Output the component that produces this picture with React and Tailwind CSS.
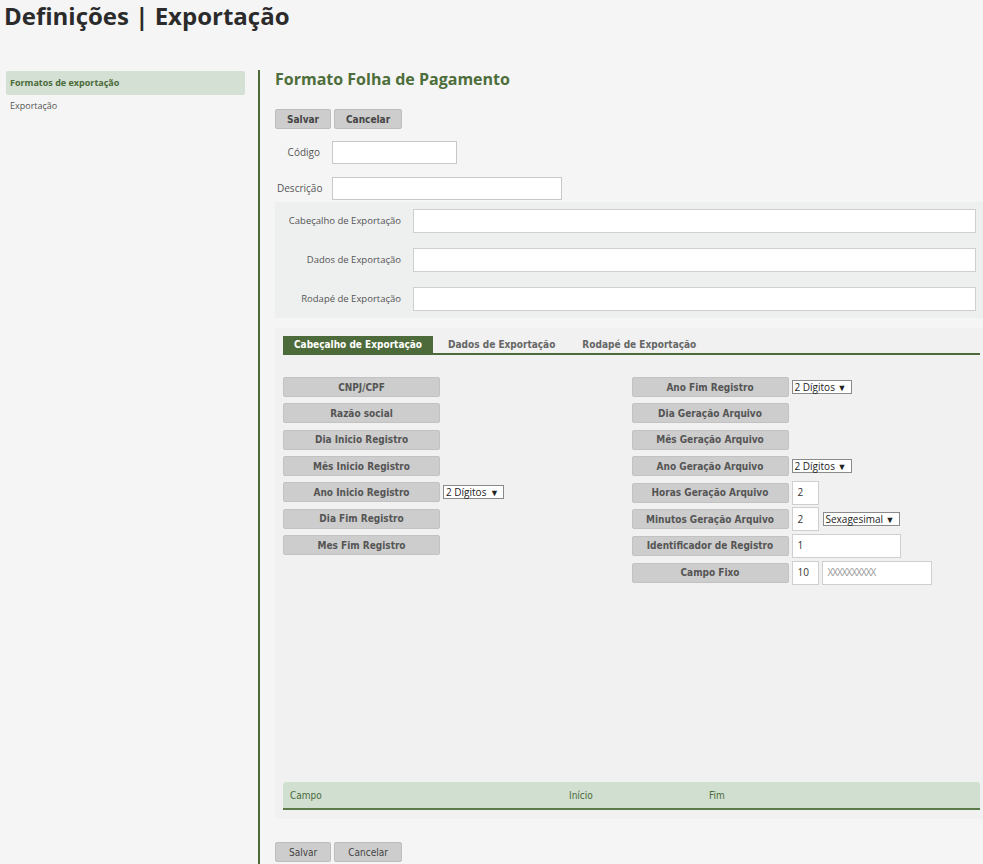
import React from 'react';

const btnFont = { fontFamily: '"DejaVu Sans Condensed", "DejaVu Sans", Verdana, sans-serif' };

const FieldBtn = ({ children }) => (
  <div
    className="w-[157px] h-[20px] flex items-center justify-center bg-[#cdcdcd] border border-[#c2c2c2] rounded-[2px] text-[10px] font-bold text-[#555] shrink-0"
    style={btnFont}
  >
    {children}
  </div>
);

const Sel = ({ label, w }) => (
  <div
    className={`h-[14px] ${w} bg-white border border-[#8a8a8a] flex items-center justify-between pl-[2px] pr-[4px] text-[10px] text-[#222] leading-none`}
    style={{ fontFamily: '"Open Sans", sans-serif' }}
  >
    <span>{label}</span>
    <span className="text-[9px]">▼</span>
  </div>
);

const Box = ({ value, w, gray }) => (
  <div
    className={`h-[24px] ${w} bg-white border border-[#cfcfcf] flex items-center px-[5px] text-[10px] ${gray ? 'text-[#999] tracking-[-1px]' : 'text-[#333]'}`}
    style={{ fontFamily: '"Open Sans", sans-serif' }}
  >
    {value}
  </div>
);

const Row = ({ children, tall }) => (
  <div className={`${tall ? 'h-[26.6px]' : 'h-[26.3px]'} flex items-center gap-[3px]`}>{children}</div>
);

const TopBtn = ({ children, light }) => (
  <button
    className={`h-[20px] bg-[#cdcdcd] border border-[#bdbdbd] rounded-[2px] text-[10px] text-[#444] ${light ? 'font-normal' : 'font-bold'}`}
    style={btnFont}
  >
    {children}
  </button>
);

export default function App() {
  return (
    <div
      className="min-h-[864px] w-[983px] bg-[#f5f5f5] text-[#333] overflow-hidden"
      style={{ fontFamily: '"Open Sans", sans-serif' }}
    >
      <h1 className="pl-[4px] text-[24px] font-bold leading-[32px] text-[#2b2b2b]">Definições | Exportação</h1>

      <div className="flex mt-[38px]">
        {/* Sidebar */}
        <div className="ml-[6px] w-[239px] pt-px shrink-0">
          <div className="h-[24px] bg-[#d3e0d3] rounded-[2px] flex items-center pl-[4px] text-[9px] font-bold text-[#4b6a3a]">
            Formatos de exportação
          </div>
          <div className="pl-[4px] mt-[4px] text-[9px] text-[#555]">Exportação</div>
        </div>

        {/* divider */}
        <div className="ml-[13px] w-[2px] bg-[#4d6b3a] min-h-[794px] shrink-0" />

        {/* Main */}
        <div className="ml-[15px] flex-1">
          <h2 className="text-[16px] font-bold leading-[20px] text-[#4d6e3a] -mt-px">Formato Folha de Pagamento</h2>

          <div className="flex gap-[3px] mt-[20px]">
            <TopBtn><span className="px-[11px]">Salvar</span></TopBtn>
            <TopBtn><span className="px-[11px]">Cancelar</span></TopBtn>
          </div>

          <div className="flex items-center mt-[12px] h-[23px]">
            <span className="w-[45px] text-right text-[10px] text-[#555]">Código</span>
            <div className="ml-[12px] w-[125px] h-[23px] bg-white border border-[#c8c8c8]" />
          </div>
          <div className="flex items-center mt-[13px] h-[23px]">
            <span className="w-[45px] pl-[2px] text-[10px] text-[#555]">Descrição</span>
            <div className="ml-[12px] w-[230px] h-[23px] bg-white border border-[#c8c8c8]" />
          </div>

          <div className="mt-[2px] bg-[#eeefef] pt-[7px] pb-[7px] pr-[7px] flex flex-col gap-[15px]">
            {['Cabeçalho de Exportação', 'Dados de Exportação', 'Rodapé de Exportação'].map((l) => (
              <div key={l} className="flex items-center">
                <span className="w-[126px] text-right text-[9.5px] text-[#555]">{l}</span>
                <div className="ml-[12px] flex-1 h-[24px] bg-white border border-[#cfcfcf]" />
              </div>
            ))}
          </div>

          <div className="mt-[10px] bg-[#f0f1f0] pt-[9px] pl-[8px] pr-[3px] pb-[9px]">
            <div className="flex items-end border-b-[2px] border-[#4d6b3a] h-[18px]" style={btnFont}>
              <div className="h-[17px] bg-[#4d6b3a] text-white text-[10px] font-bold px-[11px] flex items-center">
                Cabeçalho de Exportação
              </div>
              <div className="h-[17px] text-[#666] text-[10px] font-bold pl-[15px] flex items-center">Dados de Exportação</div>
              <div className="h-[17px] text-[#666] text-[10px] font-bold pl-[27px] flex items-center">Rodapé de Exportação</div>
            </div>

            <div className="grid grid-cols-2 pt-[19px] h-[427px]">
              <div>
                <Row><FieldBtn>CNPJ/CPF</FieldBtn></Row>
                <Row><FieldBtn>Razão social</FieldBtn></Row>
                <Row><FieldBtn>Dia Inicio Registro</FieldBtn></Row>
                <Row><FieldBtn>Mês Inicio Registro</FieldBtn></Row>
                <Row tall><FieldBtn>Ano Inicio Registro</FieldBtn><Sel label="2 Dígitos" w="w-[61px]" /></Row>
                <Row><FieldBtn>Dia Fim Registro</FieldBtn></Row>
                <Row><FieldBtn>Mes Fim Registro</FieldBtn></Row>
              </div>
              <div>
                <Row><FieldBtn>Ano Fim Registro</FieldBtn><Sel label="2 Dígitos" w="w-[60px]" /></Row>
                <Row><FieldBtn>Dia Geração Arquivo</FieldBtn></Row>
                <Row><FieldBtn>Mês Geração Arquivo</FieldBtn></Row>
                <Row tall><FieldBtn>Ano Geração Arquivo</FieldBtn><Sel label="2 Dígitos" w="w-[60px]" /></Row>
                <Row tall><FieldBtn>Horas Geração Arquivo</FieldBtn><Box value="2" w="w-[27px]" /></Row>
                <Row tall>
                  <FieldBtn>Minutos Geração Arquivo</FieldBtn>
                  <Box value="2" w="w-[27px]" />
                  <div className="ml-[1px]"><Sel label="Sexagesimal" w="w-[77px]" /></div>
                </Row>
                <Row tall><FieldBtn>Identificador de Registro</FieldBtn><Box value="1" w="w-[109px]" /></Row>
                <Row tall>
                  <FieldBtn>Campo Fixo</FieldBtn>
                  <Box value="10" w="w-[27px]" />
                  <Box value="XXXXXXXXXX" w="w-[110px]" gray />
                </Row>
              </div>
            </div>

            <div
              className="h-[28px] bg-[#d0dfd0] border-b-[2px] border-[#5a7a48] rounded-t-[3px] flex items-center text-[10px] text-[#4b6a3a]"
              style={{ fontFamily: '"DejaVu Sans Condensed", "Open Sans", sans-serif' }}
            >
              <span className="pl-[7px] w-[286px]">Campo</span>
              <span className="w-[140px]">Início</span>
              <span>Fim</span>
            </div>
          </div>

          <div className="flex gap-[3px] mt-[23px]">
            <TopBtn light><span className="px-[13px]">Salvar</span></TopBtn>
            <TopBtn light><span className="px-[13px]">Cancelar</span></TopBtn>
          </div>
        </div>
      </div>
    </div>
  );
}
